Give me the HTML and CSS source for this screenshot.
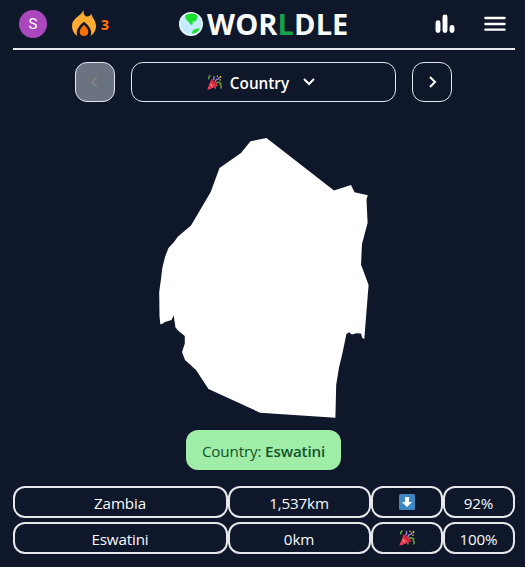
FILE: index.html
```
<!DOCTYPE html>
<html lang="en">
<head>
<meta charset="utf-8">
<title>Worldle</title>
<link rel="stylesheet" href="styles.css">
</head>
<body>
<svg class="defs" aria-hidden="true">
  <symbol id="party" viewBox="0 0 16 16">
    <path d="M4.7 4.2 11.9 11.5 1.2 15.6Q.3 15.8.5 14.9Z" fill="#e6304a"/>
    <path d="m3.5 8 4 5-1.5.6L2.8 10zM2 12l2 2.3-1.5.6-.9-1.4z" fill="#ea596e"/>
    <path d="M4.7 4.2Q5.7 3.7 9 6.8t2.9 4.7Q10.2 12.2 7 9T4.7 4.2Z" fill="#c81e38"/>
    <path d="M3.6.5Q1 2 2 4.5M9.8 8.5q2-1.5 4.8.3l-.3 2.2 1 1-.7 2.5" fill="none" stroke="#5c9c3c" stroke-width="1.6"/>
    <path d="M6.5 5Q8.7 3.5 7 1.2M9 7.2q.4-3.1 2.5-2.8 1.6 0 1.3-2.4" fill="none" stroke="#9688d4" stroke-width="1.4"/>
    <g fill="#f4c83d"><circle cx="11" cy="1.2" r=".8"/><circle cx="14.5" cy="2" r=".9"/><circle cx="14" cy="5.2" r=".8"/><circle cx="4.8" cy="10.8" r=".8"/><circle cx="9" cy="13.8" r=".7"/></g>
  </symbol>
</svg>
<header class="header">
  <div class="avatar">S</div>
  <div class="streak">
    <svg width="24" height="26" viewBox="0 0 24 26">
      <path d="M11.6 0C11.3 2.8 12 5.8 14.3 6.4 16.8 7 18.5 5.5 19.2 3.8 20.2 7.8 24 11 24 16c0 4.3-2 7.8-5.3 9.9C20.6 20.5 17 15.5 12 11.8 7 15.5 3.4 20.5 5.3 25.9 2 24 0 20.3 0 16 0 8.2 8.7 6.5 11.6 0Z" fill="#ffac33"/>
      <path d="M12 14.7C9.6 16.8 7.7 19.5 7.7 21.9 7.7 24.4 9.5 26 12 26s4.3-1.6 4.3-4.1c0-2.4-1.9-5.1-4.3-7.2Z" fill="#ff6f00"/>
    </svg>
    <span class="count">3</span>
  </div>
  <h1 class="brand">
    <svg width="24" height="24" viewBox="0 0 24 24">
      <circle cx="12" cy="12" r="12" fill="#f5faff"/><circle cx="12" cy="12" r="10.7" fill="#c4ebff"/>
      <path d="M6 3.4Q11 .3 17.2 2.5 19.5 4.2 17.8 7.3L16.5 9.5 14 9.2 13.5 12.5Q11 13.5 10.2 10.5L6.7 7Z" fill="#1be02d"/>
      <path d="M13 21.7Q13 18.2 16.5 17L21 16.2Q18.5 21.4 13 21.7Z" fill="#1be02d"/>
    </svg>
    <span class="name">WOR<b>L</b>DLE</span>
  </h1>
  <svg class="stats" width="20" height="20" viewBox="0 0 20 20" stroke="#fff" stroke-width="4.9" stroke-linecap="round"><path d="M3 8.8v7.8M10 3v13.6M17 13.4v3.2"/></svg>
  <svg class="menu" width="22" height="16" viewBox="0 0 22 16" stroke="#fff" stroke-width="2.3" stroke-linecap="round"><path d="M1.3 2h19.3M1.3 8h19.3M1.3 13.7h19.3"/></svg>
</header>
<nav class="rounds">
  <button class="step disabled" disabled><svg width="12" height="14" viewBox="0 0 12 14"><path d="M8 2 3 7l5 5"/></svg></button>
  <button class="select">
    <svg class="emoji" width="15" height="15"><use href="#party"/></svg>
    <span class="label">Country</span>
    <svg class="chevron" width="14" height="10" viewBox="0 0 14 10"><path d="m2 2 5 5 5-5"/></svg>
  </button>
  <button class="step"><svg width="12" height="14" viewBox="0 0 12 14"><path d="m4 2 5 5-5 5"/></svg></button>
</nav>
<main>
  <svg class="country" width="212" height="282" viewBox="158 137 212 282">
    <path fill="#fff" d="M250.5 141.3 266.5 138 334 190.5 351 185 354.5 192.3 367.8 195.2 366.5 199.5 367.6 223 362 244 361 264.5 368.6 285 364.3 339 362.3 338 361 333.5 356.5 333.3 352 334.6 349 332.3 346.4 334 342.5 353 339 367.5 336.2 384.8 335.4 417.8 260 412.7 208.5 389 196 370 185 360 182 352 184.8 343.5 184.8 336 178.5 331 175.5 327.5 173.7 315.5 171.5 320 165 322 162 324 160.3 324.3 159.5 316 159.2 292 161 279 162.3 268 165 257 168.5 248 174 242 178 236.5 191 225.5 210.7 192 219.5 168 241 153Z"/>
  </svg>
  <p class="answer">Country: <strong>Eswatini</strong></p>
  <div class="guesses">
    <div class="cell">Zambia</div><div class="cell">1,537km</div>
    <div class="cell"><svg width="16" height="16" viewBox="0 0 16 16"><rect width="16" height="16" rx="1.5" fill="#3b88c3"/><path d="M6 3h4v5h3l-5 5-5-5h3z" fill="#fff"/></svg></div>
    <div class="cell">92%</div>
    <div class="cell">Eswatini</div><div class="cell">0km</div>
    <div class="cell"><svg width="16" height="16"><use href="#party"/></svg></div>
    <div class="cell">100%</div>
  </div>
</main>
</body>
</html>
```
FILE: styles.css
```
* { box-sizing: border-box; }
html { overflow: hidden; }
body {
  margin: 0;
  padding: 0 10px 0 13px;
  background: #0f172a;
  color: #f8fafc;
  font: 15.2px/24px "Open Sans", "Noto Sans", sans-serif;
  letter-spacing: -0.15px;
}
.defs { display: none; }
svg { display: block; flex: none; }
.header {
  display: flex;
  align-items: center;
  height: 50px;
  border-bottom: 2px solid #e5e7eb;
}
.avatar {
  width: 28px;
  height: 28px;
  margin-left: 6px;
  border-radius: 50%;
  background: #ab47bc;
  color: #fff;
  font: 15px/28px Roboto, sans-serif;
  text-align: center;
}
.streak { display: flex; align-items: center; width: 107px; margin-left: 25px; }
.streak svg { margin-top: -2px; }
.count { margin: 2px 0 0 5px; color: #ff6f00; font: 800 14px/20px "Noto Sans", sans-serif; }
.brand { display: flex; align-items: center; width: 256px; height: 48px; margin: 0; }
.name { margin-left: 4px; font-size: 29px; font-weight: 700; line-height: 48px; letter-spacing: 0.1px; }
.name b { color: #16a34a; font-weight: 700; }
.menu { margin-left: 29px; }
.rounds { display: flex; justify-content: center; gap: 16px; margin-top: 12px; padding-right: 1px; }
.rounds button {
  display: flex;
  align-items: center;
  justify-content: center;
  height: 40px;
  padding: 0;
  border: 1px solid #e2e8f0;
  border-radius: 12px;
  background: transparent;
  color: #fff;
  font: 600 15.3px/24px "Open Sans", sans-serif;
  letter-spacing: 0;
}
.rounds path { fill: none; stroke: #fff; stroke-width: 2; }
.rounds .step { width: 40px; }
.rounds .disabled { background: #6b7280; }
.rounds .disabled path { stroke: #817e7c; }
.rounds .select { width: 265px; padding-right: 4px; }
.emoji { margin-top: 1px; }
.label { margin: 1px 13px 0 8px; }
.country { margin: 35px auto 0 145px; }
.answer {
  width: 155px;
  height: 40px;
  margin: 11px auto 0 173px;
  border-radius: 12px;
  background: #a0eda8;
  color: #14532d;
  line-height: 42px;
  text-align: center;
  white-space: nowrap;
}
.answer strong { font-weight: 600; }
.guesses { display: grid; grid-template-columns: 215px 143px 72px 72px; gap: 4px 0; margin-top: 16px; }
.cell {
  display: flex;
  align-items: center;
  justify-content: center;
  height: 32px;
  padding: 1px 1px 0 0;
  border: 2px solid #e5e7eb;
  border-radius: 12px;
  line-height: 28px;
}
.cell svg { margin: -1px -1px 0 0; }
```
